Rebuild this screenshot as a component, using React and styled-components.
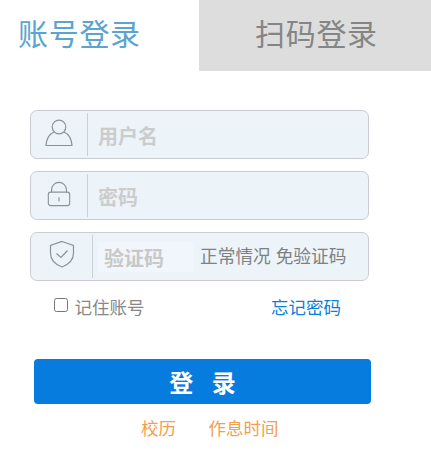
import React from "react";
import styled, { createGlobalStyle } from "styled-components";

const Global = createGlobalStyle`
  html, body { margin: 0; padding: 0; background: #fff; }
  body { font-family: "Liberation Sans", "Noto Sans CJK SC", sans-serif; }
`;
const Page = styled.div`
  width: 431px;
  height: 467px;
  overflow: hidden;
`;
const Tabs = styled.div`
  display: flex;
  height: 71px;
`;
const Tab = styled.div`
  width: ${(p) => (p.$active ? "199px" : "232px")};
  box-sizing: border-box;
  padding: 15px 0 0 ${(p) => (p.$active ? "18px" : "56px")};
  font-size: 30px;
  letter-spacing: 0.7px;
  line-height: 40px;
  background: ${(p) => (p.$active ? "#fff" : "#dddddd")};
  color: ${(p) => (p.$active ? "#5ba4cf" : "#858585")};
`;
const Form = styled.div`
  padding: 39px 0 0 30px;
  display: flex;
  flex-direction: column;
  gap: 12px;
`;
const Field = styled.div`
  width: 339px;
  height: 49px;
  box-sizing: border-box;
  display: flex;
  align-items: center;
  background: #ecf4fa;
  border: 1px solid #c9cdd1;
  border-radius: 7px;
`;
const IconCell = styled.div`
  width: ${(p) => p.$w}px;
  height: 43px;
  flex: none;
  display: flex;
  align-items: center;
  justify-content: center;
  border-right: 1px solid #ccd0d3;
  box-sizing: content-box;
`;
const Placeholder = styled.div`
  margin: 4px 0 0 10px;
  font-size: 20px;
  font-weight: 700;
  line-height: 30px;
  color: #cccccc;
`;
const CodeBox = styled(Placeholder)`
  width: 96px;
  height: 30px;
  margin: 0 0 0 5px;
  padding: 2px 0 0 6px;
  box-sizing: border-box;
  background: #f0f6fb;
  color: #c8c8c8;
`;
const Hint = styled.div`
  margin-left: 6px;
  font-size: 17.7px;
  line-height: 30px;
  color: #808080;
  white-space: nowrap;
`;
const Options = styled.div`
  display: flex;
  align-items: center;
  justify-content: space-between;
  height: 24px;
  width: 287px;
  margin: 1px 0 0 24px;
`;
const Remember = styled.label`
  display: flex;
  align-items: center;
  font-size: 17.5px;
  color: #888;
`;
const Box = styled.span`
  width: 14px;
  height: 14px;
  box-sizing: border-box;
  border: 1.5px solid #767676;
  border-radius: 2.5px;
  margin-right: 6.5px;
  margin-top: -3px;
  background: #fff;
`;
const Forgot = styled.a`
  font-size: 17.5px;
  color: #0a7fe0;
`;
const Submit = styled.button`
  display: block;
  width: 337px;
  height: 45px;
  margin: 41px 0 0 34px;
  padding: 0;
  border: 0;
  border-radius: 4px;
  background: #067cde;
  color: #fff;
  font: 700 24px "Liberation Sans", "Noto Sans CJK SC", sans-serif;
  word-spacing: 2.5px;
  white-space: pre;
`;
const Links = styled.div`
  display: flex;
  gap: 32.5px;
  padding: 13px 0 0 141px;
  font-size: 17.5px;
  line-height: 24px;
  color: #f2a050;
`;

const Ico = styled.svg`
  fill: none;
  stroke: #8d9296;
  stroke-width: 1.2;
  display: block;
  margin-top: ${(p) => p.$up || 0}px;
`;

export default function App() {
  return (
    <Page>
      <Global />
      <Tabs>
        <Tab $active>账号登录</Tab>
        <Tab>扫码登录</Tab>
      </Tabs>
      <Form>
        <Field>
          <IconCell $w={56}>
            <Ico width="28" height="28" viewBox="0 0 28 28" $up={-3}>
              <circle cx="14" cy="8" r="6.8" />
              <path d="M9 13C4.5 15 1.5 19 1 26.5H27C26.500 19 23.500 15 19 13" />
            </Ico>
          </IconCell>
          <Placeholder>用户名</Placeholder>
        </Field>
        <Field>
          <IconCell $w={56}>
            <Ico width="26" height="26" viewBox="0 0 26 28" $up={-4}>
              <path d="M5 12V9.500C5 5 8.500 1.500 13 1.500S21 5 21 9.500V12" />
              <rect x="1.500" y="12" width="23" height="14.500" rx="2.500" />
              <path d="M13 17.500V22" />
            </Ico>
          </IconCell>
          <Placeholder>密码</Placeholder>
        </Field>
        <Field>
          <IconCell $w={61}>
            <Ico width="26" height="28" viewBox="0 0 26 28" $up={-5}>
              <path d="M13 1.500L24.500 5.500V13C24.500 20 19.500 24.500 13 27C6.500 24.500 1.500 20 1.500 13V5.500Z" />
              <path d="M7.500 13.500L12 17.500L18.500 10.500" />
            </Ico>
          </IconCell>
          <CodeBox>验证码</CodeBox>
          <Hint>正常情况 免验证码</Hint>
        </Field>
        <Options>
          <Remember>
            <Box />
            记住账号
          </Remember>
          <Forgot>忘记密码</Forgot>
        </Options>
      </Form>
      <Submit>登  录</Submit>
      <Links>
        <span>校历</span>
        <span>作息时间</span>
      </Links>
    </Page>
  );
}
